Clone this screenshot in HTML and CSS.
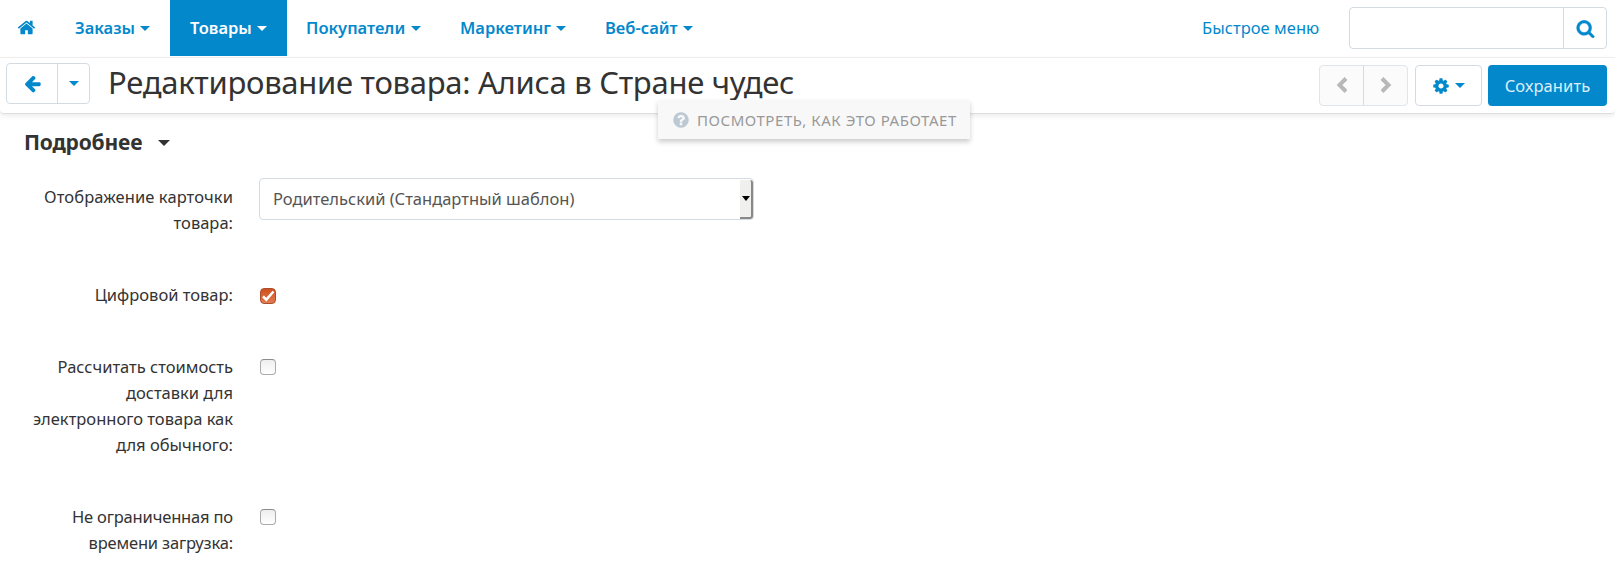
FILE: index.html
```
<!DOCTYPE html>
<html lang="ru">
<head>
<meta charset="utf-8">
<title>Редактирование товара</title>
<link rel="stylesheet" href="styles.css">
</head>
<body>
<header class="navbar">
  <nav class="menu">
    <a class="home" href="#"><svg class="icon" viewBox="0 0 1792 1792"><path d="M1472 992v480q0 26-19 45t-45 19h-384v-384h-256v384h-384q-26 0-45-19t-19-45v-480q0-1 .5-3t.5-3l575-474 575 474q1 2 1 6zm223-69l-62 74q-8 9-21 11h-3q-13 0-21-7l-692-577-692 577q-12 8-24 7-13-2-21-11l-62-74q-8-10-7-23.5t11-21.5l719-599q32-26 76-26t76 26l244 204v-195q0-14 9-23t23-9h192q14 0 23 9t9 23v408l219 182q10 8 11 21.5t-7 23.5z"/></svg></a>
    <a class="menu-item orders" href="#"><span>Заказы</span><i class="caret"></i></a>
    <a class="menu-item products active" href="#"><span>Товары</span><i class="caret"></i></a>
    <a class="menu-item customers" href="#"><span>Покупатели</span><i class="caret"></i></a>
    <a class="menu-item marketing" href="#"><span>Маркетинг</span><i class="caret"></i></a>
    <a class="menu-item website" href="#"><span>Веб-сайт</span><i class="caret"></i></a>
  </nav>
  <a class="quick" href="#"><span>Быстрое меню</span></a>
  <form class="search">
    <input class="search-input" type="text" aria-label="Поиск">
    <button class="search-button" type="button" aria-label="Найти"><svg class="icon" viewBox="0 0 1792 1792"><path d="M1216 832q0-185-131.5-316.5t-316.5-131.5-316.5 131.5-131.5 316.5 131.5 316.5 316.5 131.5 316.5-131.5 131.5-316.5zm512 832q0 52-38 90t-90 38q-54 0-90-38l-343-342q-179 124-399 124-143 0-273.5-55.5t-225-150-150-225-55.5-273.5 55.5-273.5 150-225 225-150 273.5-55.5 273.5 55.5 225 150 150 225 55.5 273.5q0 220-124 399l343 343q37 37 37 90z"/></svg></button>
  </form>
</header>
<section class="toolbar">
  <div class="group back">
    <a class="back-arrow" href="#"><svg class="icon" viewBox="0 0 1792 1792"><path d="M1664 896v128q0 53-32.5 90.5t-84.5 37.5h-704l293 294q38 36 38 90t-38 90l-75 76q-37 37-90 37-52 0-91-37l-651-652q-37-37-37-90 0-52 37-91l651-650q38-38 91-38 52 0 90 38l75 74q38 38 38 91t-38 91l-293 293h704q52 0 84.5 37.5t32.5 90.5z"/></svg></a>
    <a class="back-more" href="#"><i class="caret"></i></a>
  </div>
  <h1 class="title"><span>Редактирование товара: Алиса в Стране чудес</span></h1>
  <div class="group pager">
    <a href="#"><svg class="chevron" viewBox="0 0 12 18"><path d="M10 2.500L3.500 9l6.500 6.500"/></svg></a>
    <a href="#"><svg class="chevron" viewBox="0 0 12 18"><path d="M2 2.500L8.500 9 2 15.500"/></svg></a>
  </div>
  <a class="group gear" href="#"><svg class="icon" viewBox="0 0 1792 1792"><path d="M1152 896q0-106-75-181t-181-75-181 75-75 181 75 181 181 75 181-75 75-181zm512-109v222q0 12-8 23t-20 13l-185 28q-19 54-39 91 35 50 107 138 10 12 10 25t-9 23q-27 37-99 108t-94 71q-12 0-26-9l-138-108q-44 23-91 38-16 136-29 186-7 28-36 28h-222q-14 0-24.500-8.500t-11.500-21.500l-28-184q-49-16-90-37l-141 107q-10 9-25 9-14 0-25-11-126-114-165-168-7-10-7-23 0-12 8-23 15-21 51-66.500t54-70.500q-27-50-41-99l-183-27q-13-2-21-12.500t-8-23.500v-222q0-12 8-23t19-13l186-28q14-46 39-92-40-57-107-138-10-12-10-24 0-10 9-23 26-36 98.500-107.500t94.500-71.500q13 0 26 10l138 107q44-23 91-38 16-136 29-186 7-28 36-28h222q14 0 24.500 8.500t11.500 21.500l28 184q49 16 90 37l142-107q9-9 24-9 13 0 25 10 129 119 165 170 7 8 7 22 0 12-8 23-15 21-51 66.500t-54 70.500q26 50 41 98l183 28q13 2 21 12.500t8 23.500z"/></svg><i class="caret"></i></a>
  <button class="save" type="button"><span>Сохранить</span></button>
  <a class="how-it-works" href="#"><svg class="icon" viewBox="0 0 1792 1792"><path d="M1024 1376v-192q0-14-9-23t-23-9h-192q-14 0-23 9t-9 23v192q0 14 9 23t23 9h192q14 0 23-9t9-23zm256-672q0-88-55.500-163t-138.500-116-170-41q-243 0-371 213-15 24 8 42l132 100q7 6 19 6 16 0 25-12 53-68 86-92 34-24 86-24 48 0 85.500 26t37.500 59q0 38-20 61t-68 45q-63 28-115.500 86.500t-52.500 125.500v36q0 14 9 23t23 9h192q14 0 23-9t9-23q0-19 21.500-49.500t54.500-49.500q32-18 49-28.500t46-35 44.500-48 28-60.500 12.500-81zm384 192q0 209-103 385.500t-279.500 279.500-385.500 103-385.500-103-279.500-279.500-103-385.500 103-385.500 279.500-279.500 385.500-103 385.500 103 279.500 279.500 103 385.500z"/></svg><span>ПОСМОТРЕТЬ, КАК ЭТО РАБОТАЕТ</span></a>
</section>
<main class="content">
  <h2 class="section-title"><span>Подробнее</span><i class="caret"></i></h2>
  <div class="form">
    <div class="row"><label class="label"><span class="loose">Отображение карточки</span><br><span>товара:</span></label>
      <div class="select"><span>Родительский (Стандартный шаблон)</span><i class="select-button"></i></div></div>
    <div class="row"><label class="label"><span>Цифровой товар:</span></label>
      <span class="checkbox checked"><svg viewBox="0 0 16 16"><path d="M3 8.300L6.300 11.600 13.500 3.500"/></svg></span></div>
    <div class="row"><label class="label"><span>Рассчитать стоимость</span><br><span>доставки для</span><br><span>электронного товара как</span><br><span>для обычного:</span></label>
      <span class="checkbox"></span></div>
    <div class="row"><label class="label"><span class="tight">Не ограниченная по</span><br><span class="tight">времени загрузка:</span></label>
      <span class="checkbox"></span></div>
  </div>
</main>
</body>
</html>
```
FILE: styles.css
```
* { box-sizing: border-box; }
body {
  margin: 0;
  height: 575px;
  overflow: hidden;
  background: #fff;
  color: #333;
  font: 16.5px/26px "Noto Sans", sans-serif;
}
a { color: #0388cc; text-decoration: none; }
.icon { display: block; width: 18px; height: 18px; fill: currentColor; flex: none; }
.caret {
  flex: none;
  width: 0;
  height: 0;
  border: 5px solid transparent;
  border-top-color: currentColor;
  border-bottom: 0;
}
.navbar { display: flex; height: 58px; border-bottom: 1px solid #f0f0f0; padding-right: 8px; }
.menu { display: flex; height: 56px; flex: 1; }
.home { width: 56px; padding: 18px 0 0 17px; }
.home .icon { width: 19px; height: 19px; }
.menu-item { display: flex; align-items: center; justify-content: space-between; padding: 0 20px; font-weight: 600; white-space: nowrap; }
.orders { width: 114px; padding-left: 19px; }
.products { width: 117px; }
.customers { width: 154px; padding-left: 19px; }
.marketing { width: 145px; padding-left: 19px; }
.website { width: 127px; padding-left: 19px; }
.active { background: #0388cc; color: #fff; }
.quick { width: 147px; line-height: 56px; white-space: nowrap; letter-spacing: .05px; }
.search { display: flex; width: 258px; height: 42px; margin-top: 7px; border: 1px solid #d3dbe2; border-radius: 4px; }
.search-input { flex: 1; min-width: 0; border: 0; background: transparent; }
.search-button { display: flex; align-items: center; justify-content: center; width: 43px; padding: 0 0 0 1px; border: 0; border-left: 1px solid #d3dbe2; background: none; color: #0388cc; }
.search-button .icon { width: 19px; height: 19px; stroke: currentColor; stroke-width: 40; }
.toolbar {
  position: relative;
  display: flex;
  align-items: flex-start;
  height: 56px;
  padding: 7px 8px 0 6px;
  border-bottom: 1px solid #dedede;
  border-radius: 0 0 4px 4px;
  box-shadow: 0 2px 5px rgba(0,0,0,.08);
}
.group { display: flex; height: 41px; border: 1px solid #d3dbe2; border-radius: 4px; }
.back { width: 84px; margin-top: -2px; }
.back a, .pager a { display: flex; align-items: center; justify-content: center; }
.back-arrow { width: 50px; }
.back-arrow .icon { width: 19px; height: 19px; }
.back-more { flex: 1; border-left: 1px solid #d3dbe2; }
.title { flex: 1; margin: -2px 0 0 18px; font-size: 31px; font-weight: 400; line-height: 39px; letter-spacing: -.28px; white-space: nowrap; }
.pager { width: 89px; margin-right: 7px; border-color: #e0e5e9; background: #fbfbfb; }
.pager a { width: 43px; color: #b8b8b8; }
.pager a + a { flex: 1; border-left: 1px solid #d3dbe2; }
.chevron { width: 12px; height: 18px; margin-bottom: 1px; fill: none; stroke: currentColor; stroke-width: 4; }
.gear { width: 67px; margin-right: 6px; align-items: center; padding: 0 16px; justify-content: space-between; }
.save { width: 119px; height: 41px; padding: 0; border: 0; border-radius: 4px; background: #0388cc; color: #dceefa; font: inherit; letter-spacing: .1px; }
.how-it-works {
  position: absolute;
  left: 658px;
  top: 42px;
  display: flex;
  align-items: center;
  gap: 7px;
  width: 312px;
  height: 39px;
  padding-left: 14px;
  background: #f8f8f8;
  box-shadow: 0 3px 5px rgba(0,0,0,.2);
  color: #999;
  font-size: 15px;
  letter-spacing: .55px;
  white-space: nowrap;
}
.how-it-works .icon { color: #bcc8d2; }
.content { padding: 14px 0 0 24px; }
.section-title { display: flex; align-items: center; gap: 16px; height: 28px; margin: 0 0 28px; font-size: 21px; font-weight: 700; letter-spacing: -.2px; }
.section-title .caret { border-width: 6px 6px 0; margin-top: 1px; }
.form { display: flex; flex-direction: column; gap: 46px; }
.row { display: flex; align-items: flex-start; }
.label { width: 209px; margin-right: 26px; text-align: right; white-space: nowrap; }
.loose { letter-spacing: .1px; }
.tight { letter-spacing: -.17px; }
.select { display: flex; align-items: center; justify-content: space-between; width: 495px; height: 42px; margin: -6px 0 -10px; padding-left: 13px; border: 1px solid #d3dbe2; border-radius: 4px; color: #555; }
.select-button { display: flex; align-items: center; justify-content: center; width: 13px; height: 39px; border: solid #888; border-width: 0 2px 2px 0; border-radius: 0 3px 3px 0; background: #f0f0ee; }
.select-button::before { content: ""; border: 4px solid transparent; border-top: 5px solid #000; border-bottom: 0; }
.checkbox { width: 16px; height: 16px; margin: 5px 0 0 1px; border: 1px solid #aaa; border-top-color: #8c8c8c; border-radius: 4px; background: linear-gradient(#eee, #fff); }
.checked { margin-top: 6px; border-color: #a9502c; background: linear-gradient(#d0501f, #e37b51); }
.checked svg { display: block; width: 16px; height: 16px; margin: -1px; fill: none; stroke: #fff; stroke-width: 2.500; }
```
